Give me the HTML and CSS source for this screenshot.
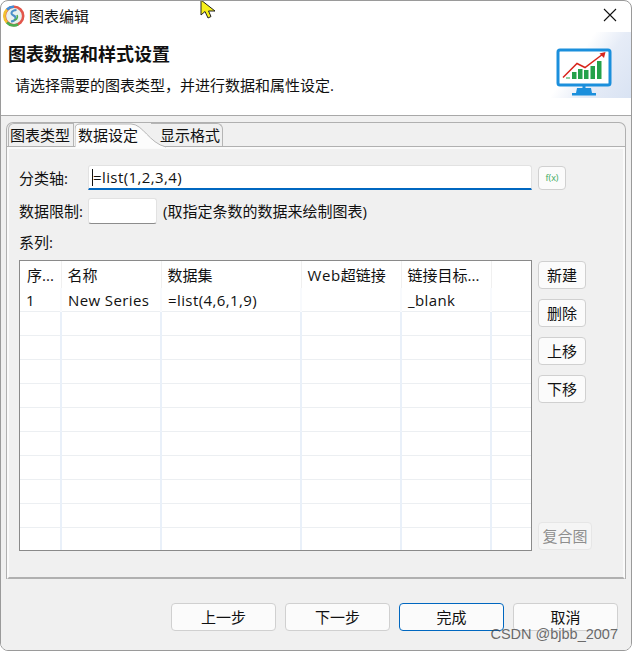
FILE: index.html
```html
<!DOCTYPE html>
<html lang="zh-CN">
<head>
    <meta charset="UTF-8">
    <title>图表编辑</title>
    <link rel="stylesheet" href="styles.css">
</head>
<body>
    <div class="window">
        <div class="titlebar">
            <svg class="app-icon" width="24" height="24" viewBox="0 0 24 24">
                <circle cx="12" cy="12" r="9.2" fill="#e8f1ee" stroke="#e2574c" stroke-width="2.6"/>
                <path d="M5 5.500A9.200 9.200 0 0 0 5 18.500" fill="none" stroke="#f2c230" stroke-width="2.600"/>
                <path d="M5 18.500A9.200 9.200 0 0 0 16 20.300" fill="none" stroke="#4caf50" stroke-width="2.600"/>
                <path d="M5 5.500A9.200 9.200 0 0 1 12 2.800" fill="none" stroke="#3f8fd8" stroke-width="2.600"/>
                <path d="M14.500 6C9 6.500 8 10 11.500 11.500S14 17 9 17.500" fill="none" stroke="#4a90c8" stroke-width="2"/>
                <path d="M15 11C16.500 14 14 16.500 12 15.500" fill="none" stroke="#4caf50" stroke-width="1.600"/>
            </svg>
            <span class="title-text">图表编辑</span>
            <svg class="close-icon" width="14" height="14" viewBox="0 0 14 14">
                <path d="M1 1L13 13M13 1L1 13" fill="none" stroke="#111" stroke-width="1.100"/>
            </svg>
        </div>

        <div class="banner">
            <div class="banner-text">
                <h1>图表数据和样式设置</h1>
                <p>请选择需要的图表类型，并进行数据和属性设定.</p>
            </div>
            <div class="banner-art">
                <svg width="60" height="50" viewBox="0 0 60 50">
                    <rect x="2" y="2" width="52" height="35" rx="2" fill="#fff" stroke="#1b8fdc" stroke-width="3"/>
                    <rect x="26.500" y="37" width="3" height="3" fill="#1b8fdc"/>
                    <path d="M21 40H35L36 45H40V47.500H16V45H20Z" fill="#1b8fdc"/>
                    <g fill="#25a14a">
                        <rect x="10" y="29.500" width="4" height="1"/>
                        <rect x="16" y="24" width="4.500" height="7"/>
                        <rect x="22" y="21" width="4.500" height="10"/>
                        <rect x="28" y="22" width="4.500" height="9"/>
                        <rect x="34.500" y="18" width="4.500" height="13"/>
                        <rect x="41" y="13" width="4.500" height="18"/>
                    </g>
                    <path d="M7 29.500L21 15.500L29 19.500L47 6" fill="none" stroke="#d8261c" stroke-width="1.500"/>
                    <path d="M49.500 4L48 10L43.500 5.500Z" fill="#d8261c"/>
                </svg>
            </div>
        </div>

        <div class="main">
            <div class="folder">
                <div class="tabs">
                    <div class="tab">图表类型</div>
                    <div class="tab tab-active">
                        <svg class="tab-shape" width="92" height="25" viewBox="0 0 92 25">
                            <path d="M0 25V6Q0 1 5 1H56C68 1 74 20 91 24V25Z" fill="#fcfcfc"/>
                            <path d="M0 24V6Q0 1 5 1H56C68 1 74 20 91 24" fill="none" stroke="#b5b5b5"/>
                        </svg>
                        <span class="tab-label">数据设定</span>
                    </div>
                    <div class="tab tab-last">显示格式</div>
                </div>
                <div class="panel">
                    <div class="row row-axis">
                        <label class="field-label">分类轴:</label>
                        <div class="text-input axis-input"><span class="caret"></span>=list(1,2,3,4)</div>
                        <div class="btn fx-btn">f(x)</div>
                    </div>
                    <div class="row row-limit">
                        <label class="field-label limit-label">数据限制:</label>
                        <div class="text-input limit-input"></div>
                        <span class="hint">(取指定条数的数据来绘制图表)</span>
                    </div>
                    <div class="series-label">系列:</div>
                    <div class="series">
                        <div class="table-wrap">
                            <table class="series-table">
                                <colgroup>
                                    <col class="col-no">
                                    <col class="col-name">
                                    <col class="col-data">
                                    <col class="col-link">
                                    <col class="col-target">
                                    <col>
                                </colgroup>
                                <thead>
                                    <tr><th>序...</th><th>名称</th><th>数据集</th><th><span class="latin">Web</span>超链接</th><th>链接目标...</th><th></th></tr>
                                </thead>
                                <tbody>
                                    <tr><td>1</td><td>New Series</td><td>=list(4,6,1,9)</td><td></td><td>_blank</td><td></td></tr>
                                    <tr><td></td><td></td><td></td><td></td><td></td><td></td></tr>
                                    <tr><td></td><td></td><td></td><td></td><td></td><td></td></tr>
                                    <tr><td></td><td></td><td></td><td></td><td></td><td></td></tr>
                                    <tr><td></td><td></td><td></td><td></td><td></td><td></td></tr>
                                    <tr><td></td><td></td><td></td><td></td><td></td><td></td></tr>
                                    <tr><td></td><td></td><td></td><td></td><td></td><td></td></tr>
                                    <tr><td></td><td></td><td></td><td></td><td></td><td></td></tr>
                                    <tr><td></td><td></td><td></td><td></td><td></td><td></td></tr>
                                    <tr><td></td><td></td><td></td><td></td><td></td><td></td></tr>
                                    <tr class="row-end"><td></td><td></td><td></td><td></td><td></td><td></td></tr>
                                </tbody>
                            </table>
                        </div>
                        <div class="side-btns">
                            <div class="btn side-btn">新建</div>
                            <div class="btn side-btn">删除</div>
                            <div class="btn side-btn">上移</div>
                            <div class="btn side-btn">下移</div>
                            <div class="btn side-btn btn-disabled">复合图</div>
                        </div>
                    </div>
                </div>
            </div>
            <div class="footer">
                <div class="btn foot-btn">上一步</div>
                <div class="btn foot-btn">下一步</div>
                <div class="btn foot-btn btn-default">完成</div>
                <div class="btn foot-btn">取消</div>
            </div>
        </div>

        <div class="watermark">CSDN @bjbb_2007</div>
        <svg class="cursor" width="18" height="22" viewBox="0 0 18 22">
            <path d="M1 0V15L5 11.500L8 18L11 16.500L8.500 11H15Z" fill="#f7f01a" stroke="#222" stroke-width="1"/>
        </svg>
    </div>
</body>
</html>
```

FILE: styles.css
```css
* {
    box-sizing: border-box;
}
html, body {
    margin: 0;
    height: 100%;
    background: #fff;
}
body {
    font-family: "Open Sans", "Noto Sans CJK SC", sans-serif;
    font-size: 15px;
    color: #111;
}
.window {
    position: relative;
    width: 632px;
    height: 651px;
    display: flex;
    flex-direction: column;
    border: 1px solid #9a9a9a;
    border-radius: 8px;
    overflow: hidden;
    background: #fff;
}

/* title bar */
.titlebar {
    display: flex;
    align-items: center;
    height: 31px;
    padding: 0 14px 1px 1px;
}
.title-text {
    margin: 0 0 2px 3px;
}
.close-icon {
    margin: 0 0 2px auto;
}

/* banner */
.banner {
    display: flex;
    justify-content: space-between;
    height: 84px;
    border-bottom: 1px solid #a8a8a8;
}
.banner h1 {
    margin: 10px 0 0 7px;
    font-size: 18px;
    font-weight: 700;
    line-height: 24px;
}
.banner p {
    margin: 8px 0 0 14px;
    line-height: 22px;
}
.banner-art {
    width: 80px;
    height: 66px;
    padding: 16px 0 0 5px;
    background: linear-gradient(125deg, #fff 35%, #e6ecf7 60%, #d9e3f3 100%);
}

/* main grey area */
.main {
    flex: 1;
    display: flex;
    flex-direction: column;
    background: #f0f0f0;
    padding: 6px 5px 0 5px;
}
.folder {
    height: 457px;
    display: flex;
    flex-direction: column;
    border: 1px solid #b0b0b0;
    border-bottom: 0;
    border-radius: 7px 7px 0 0;
}
.tabs {
    display: flex;
    height: 24px;
    padding-left: 1px;
    border-bottom: 1px solid #b0b0b0;
}
.tab {
    position: relative;
    width: 66px;
    height: 23px;
    padding-left: 1px;
    line-height: 23px;
    white-space: nowrap;
    border: 1px solid #b5b5b5;
    border-bottom: 0;
    border-radius: 6px 0 0 0;
}
.tab-active {
    width: 70px;
    height: 24px;
    margin-left: 1px;
    border: 0;
    padding-left: 3px;
    line-height: 25px;
    z-index: 1;
}
.tab-shape {
    position: absolute;
    left: 0;
    top: 0;
}
.tab-label {
    position: relative;
}
.tab-last {
    width: 72px;
    margin-left: 6px;
    padding-left: 9px;
    border-left: 0;
    border-radius: 0 6px 0 0;
}

/* panel */
.panel {
    flex: 1;
    padding: 16px 12px 0 10px;
    border-top: 2px solid #fafafa;
    border-left: 2px solid #fafafa;
    border-right: 2px solid #fafafa;
    border-bottom: 2px solid #b0b0b0;
}
.row {
    display: flex;
    align-items: center;
}
.field-label {
    width: 69px;
    flex: none;
}
.limit-label {
    padding-bottom: 2px;
}
.text-input {
    height: 25px;
    background: #fff;
    border: 1px solid #e2e2e2;
    border-bottom: 1px solid #8c8c8c;
    border-radius: 3px;
}
.axis-input {
    width: 444px;
    padding-left: 3px;
    letter-spacing: 0.4px;
    line-height: 23px;
    border-bottom: 2px solid #0067c0;
    border-radius: 3px 3px 0 0;
}
.caret {
    display: inline-block;
    width: 1px;
    height: 17px;
    vertical-align: -3px;
    background: #111;
}
.limit-input {
    width: 69px;
    height: 26px;
}
.row-limit {
    margin-top: 8px;
}
.hint {
    margin-left: 6px;
    padding-bottom: 2px;
}
.series-label {
    margin-top: 7px;
    line-height: 22px;
}

/* table */
.series {
    display: flex;
    margin-top: 7px;
}
.table-wrap {
    width: 513px;
    height: 291px;
    background: #fff;
    border: 1px solid #8a8a8a;
    overflow: hidden;
}
.series-table {
    width: 511px;
    table-layout: fixed;
    border-collapse: collapse;
}
.col-no { width: 41px; }
.col-name { width: 100px; }
.col-data { width: 140px; }
.col-link { width: 100px; }
.col-target { width: 90px; }
.series-table th {
    height: 27px;
    padding: 0 0 0 6px;
    font-weight: 400;
    text-align: left;
    white-space: nowrap;
    overflow: hidden;
    border-right: 1px solid #f0f0f0;
}
.series-table td {
    height: 24px;
    padding: 1px 0 0 6px;
    letter-spacing: 0.4px;
    white-space: nowrap;
    border-right: 2px solid #e9f0f9;
    border-bottom: 1px solid #eceff2;
}
.series-table th:first-child {
    padding-left: 7px;
}
.series-table th:last-child,
.series-table td:last-child {
    border-right: 0;
}
.series-table tbody tr:first-child td {
    height: 23px;
    border-right-color: #f8fafd;
}
.row-end td {
    border-bottom: 0;
}
.latin {
    letter-spacing: 0.6px;
}

/* buttons */
.btn {
    display: flex;
    align-items: center;
    justify-content: center;
    height: 28px;
    padding-bottom: 2px;
    background: #fbfbfb;
    border: 1px solid #d0d0d0;
    border-radius: 4px;
}
.fx-btn {
    width: 28px;
    height: 24px;
    margin-left: 6px;
    padding-bottom: 0;
    font-size: 9px;
    color: #3aa85a;
}
.side-btns {
    display: flex;
    flex-direction: column;
    gap: 10px;
    margin-left: 6px;
    padding-top: 1px;
}
.side-btn {
    width: 48px;
}
.btn-disabled {
    width: 54px;
    margin-top: auto;
    margin-bottom: 1px;
    color: #8e8e8e;
    background: #f5f5f5;
    border-color: #e6e6e6;
}
.footer {
    display: flex;
    justify-content: flex-end;
    gap: 9px;
    margin-top: 24px;
    padding-right: 8px;
}
.foot-btn {
    width: 105px;
}
.btn-default {
    border-color: #0067c0;
}

/* overlays */
.watermark {
    position: absolute;
    right: 13px;
    bottom: 8px;
    font-family: "Liberation Sans", sans-serif;
    font-size: 14.500px;
    color: rgba(70, 70, 70, 0.8);
}
.cursor {
    position: absolute;
    left: 199px;
    top: -1px;
}
```
